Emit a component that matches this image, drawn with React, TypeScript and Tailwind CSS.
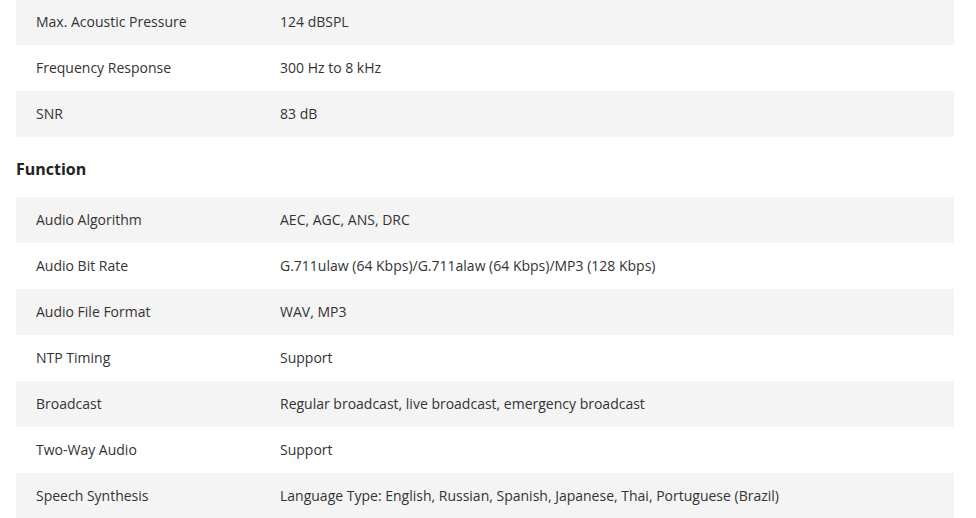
const topRows: [string, string][] = [
  ["Max. Acoustic Pressure", "124 dBSPL"],
  ["Frequency Response", "300 Hz to 8 kHz"],
  ["SNR", "83 dB"],
];

const functionRows: [string, string][] = [
  ["Audio Algorithm", "AEC, AGC, ANS, DRC"],
  ["Audio Bit Rate", "G.711ulaw (64 Kbps)/G.711alaw (64 Kbps)/MP3 (128 Kbps)"],
  ["Audio File Format", "WAV, MP3"],
  ["NTP Timing", "Support"],
  ["Broadcast", "Regular broadcast, live broadcast, emergency broadcast"],
  ["Two-Way Audio", "Support"],
  ["Speech Synthesis", "Language Type: English, Russian, Spanish, Japanese, Thai, Portuguese (Brazil)"],
];

function SpecTable({ rows }: { rows: [string, string][] }) {
  return (
    <div className="flex flex-col">
      {rows.map(([label, value], i) => (
        <div
          key={label}
          className={`flex items-center h-[46px] px-5 text-sm text-[#333] ${i % 2 === 0 ? "bg-[#f4f4f4]" : "bg-white"}`}
        >
          <div className="w-[244px] shrink-0">{label}</div>
          <div>{value}</div>
        </div>
      ))}
    </div>
  );
}

export default function App() {
  return (
    <div className="min-h-screen bg-white font-['Open_Sans',sans-serif]">
      <div className="ml-4 mr-[22px] -mt-px">
        <SpecTable rows={topRows} />
        <h3 className="mt-5 mb-4 text-base leading-6 font-bold text-[#222]">Function</h3>
        <SpecTable rows={functionRows} />
      </div>
    </div>
  );
}
